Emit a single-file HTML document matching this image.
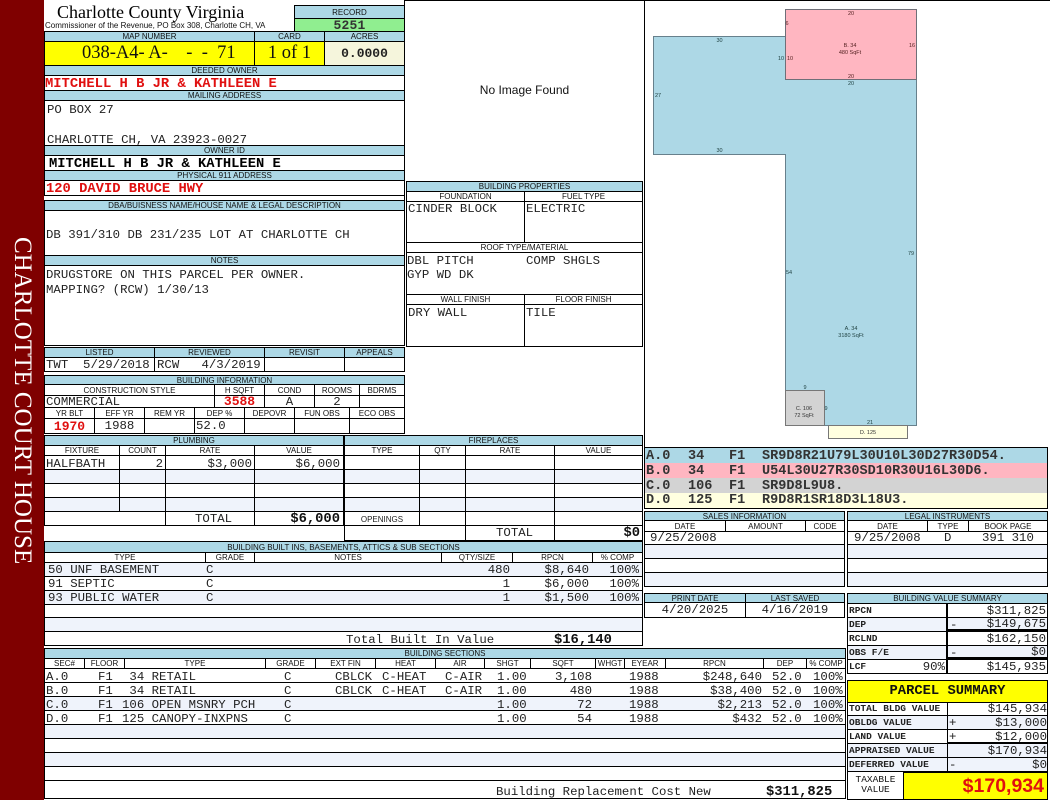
<!DOCTYPE html>
<html><head><meta charset="utf-8"><title>Charlotte County Virginia</title>
<style>
html,body{margin:0;padding:0;background:#fff;width:1050px;height:800px;overflow:hidden}
div{position:absolute;box-sizing:border-box;display:flex;align-items:center;white-space:pre;overflow:hidden;font-family:"Liberation Mono",monospace;font-size:12.35px;color:#222}
.x{border:1px solid #000}
.l{border:1px solid #000;background:#add8e6;justify-content:center;font:8px "Liberation Sans",sans-serif;color:#111}
.s{border:1px solid #000;background:#fff;justify-content:center;font:8px "Liberation Sans",sans-serif;color:#111}
.c{justify-content:center}
.r{justify-content:flex-end}
.b{font-weight:bold;font-size:13.8px;color:#111}
.red{color:#e01010}
.t{background:#eff3fb}
.v{background:#000;width:1px}
.h{background:#000;height:1px}
.f{font-weight:bold;font-size:13.55px;color:#333;height:15px}
.k{font-weight:bold;font-size:9.5px;color:#222}
</style></head><body>

<div style="left:0;top:0;width:44px;height:800px;background:#7f0000"></div>
<div style="left:0;top:236px;width:44px;height:330px;writing-mode:vertical-rl;justify-content:center;align-items:center;font:25px 'Liberation Serif',serif;color:#fff">CHARLOTTE COURT HOUSE</div>

<div style="left:57px;top:2px;width:200px;height:20px;font:18px 'Liberation Serif',serif;color:#000">Charlotte County Virginia</div>
<div style="left:45px;top:20px;width:240px;height:10px;font:8px 'Liberation Sans',sans-serif;color:#111">Commissioner of the Revenue, PO Box 308, Charlotte CH, VA</div>

<div class="l" style="left:294px;top:5px;width:111px;height:14px">RECORD</div>
<div class="x c" style="left:294px;top:18px;width:111px;height:14px;background:#90ee90;font-weight:bold;font-size:13px;color:#333;letter-spacing:.2px">5251</div>

<div class="l" style="left:44px;top:31px;width:211px;height:11px">MAP NUMBER</div>
<div class="l" style="left:254px;top:31px;width:71px;height:11px">CARD</div>
<div class="l" style="left:324px;top:31px;width:81px;height:11px">ACRES</div>
<div class="x" style="left:44px;top:41px;width:211px;height:25px;background:#ff0;font:18.5px 'Liberation Serif',serif;color:#111;padding-left:37px">038-A4- A-    -  -  71</div>
<div class="x c" style="left:254px;top:41px;width:71px;height:25px;background:#ff0;font:18.5px 'Liberation Serif',serif;color:#111">1 of 1</div>
<div class="x c" style="left:324px;top:41px;width:81px;height:25px;background:#f5f5dc;font-weight:bold;font-size:13px;color:#222">0.0000</div>

<div class="l" style="left:44px;top:65px;width:361px;height:11px">DEEDED OWNER</div>
<div class="x b red" style="left:44px;top:75px;width:361px;height:16px;padding-top:2px">MITCHELL H B JR &amp; KATHLEEN E</div>
<div class="l" style="left:44px;top:90px;width:361px;height:11px">MAILING ADDRESS</div>
<div class="x" style="left:44px;top:100px;width:361px;height:46px"></div>
<div style="left:47px;top:103px;height:14px;width:300px">PO BOX 27</div>
<div style="left:47px;top:133px;height:14px;width:300px">CHARLOTTE CH, VA 23923-0027</div>
<div class="l" style="left:44px;top:145px;width:361px;height:11px">OWNER ID</div>
<div class="x b" style="left:44px;top:155px;width:361px;height:16px;padding:2px 0 0 4px;color:#000">MITCHELL H B JR &amp; KATHLEEN E</div>
<div class="l" style="left:44px;top:170px;width:361px;height:11px">PHYSICAL 911 ADDRESS</div>
<div class="x b red" style="left:44px;top:180px;width:361px;height:16px;padding:2px 0 0 1px">120 DAVID BRUCE HWY</div>

<div class="l" style="left:44px;top:200px;width:361px;height:11px">DBA/BUISNESS NAME/HOUSE NAME &amp; LEGAL DESCRIPTION</div>
<div class="x" style="left:44px;top:210px;width:361px;height:46px"></div>
<div style="left:46px;top:228px;height:14px;width:340px">DB 391/310 DB 231/235 LOT AT CHARLOTTE CH</div>
<div class="l" style="left:44px;top:255px;width:361px;height:11px">NOTES</div>
<div class="x" style="left:44px;top:265px;width:361px;height:81px"></div>
<div style="left:46px;top:268px;height:14px;width:340px">DRUGSTORE ON THIS PARCEL PER OWNER.</div>
<div style="left:46px;top:283px;height:14px;width:340px">MAPPING? (RCW) 1/30/13</div>

<div class="l" style="left:44px;top:347px;width:111px;height:11px">LISTED</div>
<div class="l" style="left:154px;top:347px;width:111px;height:11px">REVIEWED</div>
<div class="l" style="left:264px;top:347px;width:81px;height:11px">REVISIT</div>
<div class="l" style="left:344px;top:347px;width:61px;height:11px">APPEALS</div>
<div class="x" style="left:44px;top:357px;width:111px;height:15px;padding-left:1px">TWT  5/29/2018</div>
<div class="x" style="left:154px;top:357px;width:111px;height:15px;padding-left:2px">RCW   4/3/2019</div>
<div class="x" style="left:264px;top:357px;width:81px;height:15px"></div>
<div class="x" style="left:344px;top:357px;width:61px;height:15px"></div>

<div class="l" style="left:44px;top:375px;width:361px;height:10px">BUILDING INFORMATION</div>
<div class="s" style="left:44px;top:384px;width:171px;height:12px">CONSTRUCTION STYLE</div>
<div class="s" style="left:214px;top:384px;width:51px;height:12px">H SQFT</div>
<div class="s" style="left:264px;top:384px;width:51px;height:12px">COND</div>
<div class="s" style="left:314px;top:384px;width:46px;height:12px">ROOMS</div>
<div class="s" style="left:359px;top:384px;width:46px;height:12px">BDRMS</div>
<div class="x" style="left:44px;top:395px;width:171px;height:13px;padding-left:1px">COMMERCIAL</div>
<div class="x c b red" style="left:214px;top:395px;width:51px;height:13px;font-size:13px">3588</div>
<div class="x c" style="left:264px;top:395px;width:51px;height:13px">A</div>
<div class="x c" style="left:314px;top:395px;width:46px;height:13px">2</div>
<div class="x" style="left:359px;top:395px;width:46px;height:13px"></div>
<div class="s" style="left:44px;top:407px;width:51px;height:12px">YR BLT</div>
<div class="s" style="left:94px;top:407px;width:51px;height:12px">EFF YR</div>
<div class="s" style="left:144px;top:407px;width:51px;height:12px">REM YR</div>
<div class="s" style="left:194px;top:407px;width:51px;height:12px">DEP %</div>
<div class="s" style="left:244px;top:407px;width:51px;height:12px">DEPOVR</div>
<div class="s" style="left:294px;top:407px;width:56px;height:12px">FUN OBS</div>
<div class="s" style="left:349px;top:407px;width:56px;height:12px">ECO OBS</div>
<div class="x c b red" style="left:44px;top:418px;width:51px;height:16px;font-size:13px">1970</div>
<div class="x c" style="left:94px;top:418px;width:51px;height:16px">1988</div>
<div class="x" style="left:144px;top:418px;width:51px;height:16px"></div>
<div class="x" style="left:194px;top:418px;width:51px;height:16px;padding-left:1px">52.0</div>
<div class="x" style="left:244px;top:418px;width:51px;height:16px"></div>
<div class="x" style="left:294px;top:418px;width:56px;height:16px"></div>
<div class="x" style="left:349px;top:418px;width:56px;height:16px"></div>

<!-- Top right frame -->
<div class="h" style="left:404px;top:0;width:646px"></div>
<div class="v" style="left:404px;top:0;height:346px"></div>
<div class="v" style="left:644px;top:0;height:448px"></div>
<div class="c" style="left:405px;top:80px;width:239px;height:20px;font:12px 'Liberation Sans',sans-serif;color:#111">No Image Found</div>

<!-- Building properties -->
<div class="l" style="left:406px;top:181px;width:237px;height:11px">BUILDING PROPERTIES</div>
<div class="s" style="left:406px;top:191px;width:119px;height:11px">FOUNDATION</div>
<div class="s" style="left:524px;top:191px;width:119px;height:11px">FUEL TYPE</div>
<div class="x" style="left:406px;top:201px;width:119px;height:42px;align-items:flex-start;padding:0 0 0 1px">CINDER BLOCK</div>
<div class="x" style="left:524px;top:201px;width:119px;height:42px;align-items:flex-start;padding-left:1px">ELECTRIC</div>
<div class="s" style="left:406px;top:242px;width:237px;height:11px">ROOF TYPE/MATERIAL</div>
<div class="x" style="left:406px;top:252px;width:237px;height:43px"></div>
<div style="left:407px;top:254px;width:110px;height:14px">DBL PITCH</div>
<div style="left:526px;top:254px;width:110px;height:14px">COMP SHGLS</div>
<div style="left:407px;top:268px;width:110px;height:14px">GYP WD DK</div>
<div class="s" style="left:406px;top:294px;width:119px;height:11px">WALL FINISH</div>
<div class="s" style="left:524px;top:294px;width:119px;height:11px">FLOOR FINISH</div>
<div class="x" style="left:406px;top:304px;width:119px;height:43px;align-items:flex-start;padding:1px 0 0 1px">DRY WALL</div>
<div class="x" style="left:524px;top:304px;width:119px;height:43px;align-items:flex-start;padding:1px 0 0 1px">TILE</div>

<!-- Plumbing -->
<div class="l" style="left:44px;top:435px;width:300px;height:11px">PLUMBING</div>
<div class="s" style="left:44px;top:445px;width:76px;height:11px">FIXTURE</div>
<div class="s" style="left:119px;top:445px;width:47px;height:11px">COUNT</div>
<div class="s" style="left:165px;top:445px;width:90px;height:11px">RATE</div>
<div class="s" style="left:254px;top:445px;width:90px;height:11px">VALUE</div>
<div class="x" style="left:44px;top:455px;width:300px;height:15px"></div>
<div class="x t" style="left:44px;top:469px;width:300px;height:15px"></div>
<div class="x" style="left:44px;top:483px;width:300px;height:15px"></div>
<div class="x t" style="left:44px;top:497px;width:300px;height:15px"></div>
<div class="x" style="left:44px;top:511px;width:300px;height:15px"></div>
<div class="v" style="left:119px;top:455px;height:56px"></div>
<div class="v" style="left:165px;top:455px;height:71px"></div>
<div class="v" style="left:254px;top:455px;height:71px"></div>
<div style="left:46px;top:457px;width:70px;height:14px">HALFBATH</div>
<div class="r" style="left:120px;top:457px;width:43px;height:14px">2</div>
<div class="r" style="left:166px;top:457px;width:86px;height:14px">$3,000</div>
<div class="r" style="left:255px;top:457px;width:85px;height:14px">$6,000</div>
<div style="left:195px;top:512px;width:50px;height:14px">TOTAL</div>
<div class="b r" style="left:255px;top:512px;width:85px;height:14px">$6,000</div>

<!-- Fireplaces -->
<div class="l" style="left:344px;top:435px;width:299px;height:11px">FIREPLACES</div>
<div class="s" style="left:344px;top:445px;width:76px;height:11px">TYPE</div>
<div class="s" style="left:419px;top:445px;width:47px;height:11px">QTY</div>
<div class="s" style="left:465px;top:445px;width:90px;height:11px">RATE</div>
<div class="s" style="left:554px;top:445px;width:89px;height:11px">VALUE</div>
<div class="x" style="left:344px;top:455px;width:299px;height:15px"></div>
<div class="x t" style="left:344px;top:469px;width:299px;height:15px"></div>
<div class="x" style="left:344px;top:483px;width:299px;height:15px"></div>
<div class="x t" style="left:344px;top:497px;width:299px;height:15px"></div>
<div class="x" style="left:344px;top:511px;width:299px;height:15px"></div>
<div class="x" style="left:344px;top:525px;width:299px;height:16px"></div>
<div class="v" style="left:419px;top:455px;height:71px"></div>
<div class="v" style="left:465px;top:455px;height:86px"></div>
<div class="v" style="left:554px;top:455px;height:86px"></div>
<div class="c" style="left:345px;top:512px;width:74px;height:14px;font:8px 'Liberation Sans',sans-serif">OPENINGS</div>
<div style="left:496px;top:526px;width:50px;height:14px">TOTAL</div>
<div class="b r" style="left:555px;top:526px;width:85px;height:14px">$0</div>

<!-- Built ins -->
<div class="l" style="left:44px;top:541px;width:599px;height:12px">BUILDING BUILT INS, BASEMENTS, ATTICS &amp; SUB SECTIONS</div>
<div class="s" style="left:44px;top:552px;width:162px;height:11px">TYPE</div>
<div class="s" style="left:205px;top:552px;width:50px;height:11px">GRADE</div>
<div class="s" style="left:254px;top:552px;width:188px;height:11px">NOTES</div>
<div class="s" style="left:441px;top:552px;width:72px;height:11px">QTY/SIZE</div>
<div class="s" style="left:512px;top:552px;width:81px;height:11px">RPCN</div>
<div class="s" style="left:592px;top:552px;width:51px;height:11px">% COMP</div>
<div class="x t" style="left:44px;top:562px;width:599px;height:15px"></div>
<div class="x" style="left:44px;top:576px;width:599px;height:15px"></div>
<div class="x t" style="left:44px;top:590px;width:599px;height:15px"></div>
<div class="x" style="left:44px;top:604px;width:599px;height:14px"></div>
<div class="x t" style="left:44px;top:617px;width:599px;height:15px"></div>
<div class="x" style="left:44px;top:631px;width:599px;height:15px"></div>
<div style="left:48px;top:563px;width:150px;height:14px">50 UNF BASEMENT</div>
<div style="left:48px;top:577px;width:150px;height:14px">91 SEPTIC</div>
<div style="left:48px;top:591px;width:150px;height:14px">93 PUBLIC WATER</div>
<div style="left:206px;top:563px;width:20px;height:14px">C</div>
<div style="left:206px;top:577px;width:20px;height:14px">C</div>
<div style="left:206px;top:591px;width:20px;height:14px">C</div>
<div class="r" style="left:450px;top:563px;width:60px;height:14px">480</div>
<div class="r" style="left:450px;top:577px;width:60px;height:14px">1</div>
<div class="r" style="left:450px;top:591px;width:60px;height:14px">1</div>
<div class="r" style="left:520px;top:563px;width:69px;height:14px">$8,640</div>
<div class="r" style="left:520px;top:577px;width:69px;height:14px">$6,000</div>
<div class="r" style="left:520px;top:591px;width:69px;height:14px">$1,500</div>
<div class="r" style="left:593px;top:563px;width:46px;height:14px">100%</div>
<div class="r" style="left:593px;top:577px;width:46px;height:14px">100%</div>
<div class="r" style="left:593px;top:591px;width:46px;height:14px">100%</div>
<div style="left:346px;top:633px;width:160px;height:14px">Total Built In Value</div>
<div class="b" style="left:554px;top:633px;width:70px;height:14px">$16,140</div>

<!-- Building sections -->
<div class="l" style="left:44px;top:648px;width:802px;height:11px">BUILDING SECTIONS</div>
<div class="s" style="left:44px;top:658px;width:41px;height:11px">SEC#</div>
<div class="s" style="left:84px;top:658px;width:41px;height:11px">FLOOR</div>
<div class="s" style="left:124px;top:658px;width:142px;height:11px">TYPE</div>
<div class="s" style="left:265px;top:658px;width:51px;height:11px">GRADE</div>
<div class="s" style="left:315px;top:658px;width:61px;height:11px">EXT FIN</div>
<div class="s" style="left:375px;top:658px;width:61px;height:11px">HEAT</div>
<div class="s" style="left:435px;top:658px;width:50px;height:11px">AIR</div>
<div class="s" style="left:484px;top:658px;width:47px;height:11px">SHGT</div>
<div class="s" style="left:530px;top:658px;width:66px;height:11px">SQFT</div>
<div class="s" style="left:595px;top:658px;width:30px;height:11px">WHGT</div>
<div class="s" style="left:624px;top:658px;width:42px;height:11px">EYEAR</div>
<div class="s" style="left:665px;top:658px;width:99px;height:11px">RPCN</div>
<div class="s" style="left:763px;top:658px;width:44px;height:11px">DEP</div>
<div class="s" style="left:806px;top:658px;width:40px;height:11px">% COMP</div>
<div class="x" style="left:44px;top:668px;width:802px;height:15px"></div>
<div class="x" style="left:44px;top:682px;width:802px;height:15px"></div>
<div class="x t" style="left:44px;top:696px;width:802px;height:15px"></div>
<div class="x" style="left:44px;top:710px;width:802px;height:15px"></div>
<div class="x t" style="left:44px;top:724px;width:802px;height:15px"></div>
<div class="x" style="left:44px;top:738px;width:802px;height:15px"></div>
<div class="x t" style="left:44px;top:752px;width:802px;height:15px"></div>
<div class="x" style="left:44px;top:766px;width:802px;height:15px"></div>
<div class="x" style="left:44px;top:780px;width:802px;height:19px"></div>

<div style="left:46px;top:670px;width:40px;height:14px">A.0</div>
<div style="left:98px;top:670px;width:20px;height:14px">F1</div>
<div style="left:122px;top:670px;width:140px;height:14px"> 34 RETAIL</div>
<div style="left:284px;top:670px;width:14px;height:14px">C</div>
<div style="left:335px;top:670px;width:42px;height:14px">CBLCK</div>
<div style="left:382px;top:670px;width:50px;height:14px">C-HEAT</div>
<div style="left:445px;top:670px;width:40px;height:14px">C-AIR</div>
<div style="left:497px;top:670px;width:32px;height:14px">1.00</div>
<div class="r" style="left:540px;top:670px;width:52px;height:14px">3,108</div>
<div style="left:629px;top:670px;width:32px;height:14px">1988</div>
<div class="r" style="left:690px;top:670px;width:72px;height:14px">$248,640</div>
<div style="left:772px;top:670px;width:32px;height:14px">52.0</div>
<div style="left:813px;top:670px;width:32px;height:14px">100%</div>

<div style="left:46px;top:684px;width:40px;height:14px">B.0</div>
<div style="left:98px;top:684px;width:20px;height:14px">F1</div>
<div style="left:122px;top:684px;width:140px;height:14px"> 34 RETAIL</div>
<div style="left:284px;top:684px;width:14px;height:14px">C</div>
<div style="left:335px;top:684px;width:42px;height:14px">CBLCK</div>
<div style="left:382px;top:684px;width:50px;height:14px">C-HEAT</div>
<div style="left:445px;top:684px;width:40px;height:14px">C-AIR</div>
<div style="left:497px;top:684px;width:32px;height:14px">1.00</div>
<div class="r" style="left:540px;top:684px;width:52px;height:14px">480</div>
<div style="left:629px;top:684px;width:32px;height:14px">1988</div>
<div class="r" style="left:690px;top:684px;width:72px;height:14px">$38,400</div>
<div style="left:772px;top:684px;width:32px;height:14px">52.0</div>
<div style="left:813px;top:684px;width:32px;height:14px">100%</div>

<div style="left:46px;top:698px;width:40px;height:14px">C.0</div>
<div style="left:98px;top:698px;width:20px;height:14px">F1</div>
<div style="left:122px;top:698px;width:140px;height:14px">106 OPEN MSNRY PCH</div>
<div style="left:284px;top:698px;width:14px;height:14px">C</div>
<div style="left:497px;top:698px;width:32px;height:14px">1.00</div>
<div class="r" style="left:540px;top:698px;width:52px;height:14px">72</div>
<div style="left:629px;top:698px;width:32px;height:14px">1988</div>
<div class="r" style="left:690px;top:698px;width:72px;height:14px">$2,213</div>
<div style="left:772px;top:698px;width:32px;height:14px">52.0</div>
<div style="left:813px;top:698px;width:32px;height:14px">100%</div>

<div style="left:46px;top:712px;width:40px;height:14px">D.0</div>
<div style="left:98px;top:712px;width:20px;height:14px">F1</div>
<div style="left:122px;top:712px;width:140px;height:14px">125 CANOPY-INXPNS</div>
<div style="left:284px;top:712px;width:14px;height:14px">C</div>
<div style="left:497px;top:712px;width:32px;height:14px">1.00</div>
<div class="r" style="left:540px;top:712px;width:52px;height:14px">54</div>
<div style="left:629px;top:712px;width:32px;height:14px">1988</div>
<div class="r" style="left:690px;top:712px;width:72px;height:14px">$432</div>
<div style="left:772px;top:712px;width:32px;height:14px">52.0</div>
<div style="left:813px;top:712px;width:32px;height:14px">100%</div>

<div style="left:496px;top:785px;width:230px;height:14px">Building Replacement Cost New</div>
<div class="b" style="left:766px;top:785px;width:70px;height:14px">$311,825</div>

<!-- Sketch -->
<svg style="position:absolute;left:645px;top:1px" width="403" height="446" viewBox="645 1 403 446" xmlns="http://www.w3.org/2000/svg">
<g stroke="#67808c" stroke-width="1" shape-rendering="crispEdges">
<path d="M653.5 36.5H785.5V79.5H916.5V425.5H785.5V154.5H653.5Z" fill="#add8e6"/>
<rect x="785.5" y="9.5" width="131" height="70" fill="#ffb6c1" stroke="#6f6f78"/>
<rect x="785.5" y="390.5" width="39" height="35" fill="#d3d3d3" stroke="#777"/>
<rect x="828.5" y="425.5" width="79" height="13" fill="#ffffe0" stroke="#777"/>
</g>
<g font-family="Liberation Sans, sans-serif" font-size="5.5" fill="#244" text-anchor="middle">
<text x="719.5" y="42">30</text><text x="658" y="97">27</text><text x="719.5" y="152">30</text>
<text x="789" y="274">54</text><text x="911" y="255">79</text><text x="851" y="85">20</text>
<text x="781" y="60">10</text><text x="851" y="330">A. 34</text><text x="851" y="337">3180 SqFt</text>
<text x="805" y="389">9</text><text x="826" y="410">9</text><text x="870" y="424">21</text>
</g>
<g font-family="Liberation Sans, sans-serif" font-size="5.5" fill="#522" text-anchor="middle">
<text x="851" y="15">20</text><text x="787" y="25">6</text><text x="790" y="60">10</text>
<text x="850" y="47">B. 34</text><text x="850" y="54">480 SqFt</text><text x="912" y="47">16</text><text x="851" y="78">20</text>
</g>
<g font-family="Liberation Sans, sans-serif" font-size="5.5" fill="#333" text-anchor="middle">
<text x="804" y="410">C. 106</text><text x="804" y="417">72 SqFt</text><text x="868" y="434">D. 125</text>
</g>
</svg>

<!-- Sketch vectors -->
<div style="left:644px;top:448px;width:404px;height:15px;background:#add8e6"></div>
<div style="left:644px;top:463px;width:404px;height:15px;background:#ffb6c1"></div>
<div style="left:644px;top:478px;width:404px;height:15px;background:#d3d3d3"></div>
<div style="left:644px;top:493px;width:404px;height:15px;background:#ffffe0"></div>
<div class="x" style="left:644px;top:447px;width:404px;height:62px;background:transparent"></div>
<div class="f" style="left:646px;top:449px;width:40px">A.0</div><div class="f" style="left:688px;top:449px;width:30px">34</div><div class="f" style="left:729px;top:449px;width:30px">F1</div><div class="f" style="left:762px;top:449px;width:280px">SR9D8R21U79L30U10L30D27R30D54.</div>
<div class="f" style="left:646px;top:464px;width:40px">B.0</div><div class="f" style="left:688px;top:464px;width:30px">34</div><div class="f" style="left:729px;top:464px;width:30px">F1</div><div class="f" style="left:762px;top:464px;width:280px">U54L30U27R30SD10R30U16L30D6.</div>
<div class="f" style="left:646px;top:479px;width:40px">C.0</div><div class="f" style="left:688px;top:479px;width:30px">106</div><div class="f" style="left:729px;top:479px;width:30px">F1</div><div class="f" style="left:762px;top:479px;width:280px">SR9D8L9U8.</div>
<div class="f" style="left:646px;top:493px;width:40px">D.0</div><div class="f" style="left:688px;top:493px;width:30px">125</div><div class="f" style="left:729px;top:493px;width:30px">F1</div><div class="f" style="left:762px;top:493px;width:280px">R9D8R1SR18D3L18U3.</div>

<!-- Sales info -->
<div class="l" style="left:644px;top:511px;width:201px;height:10px">SALES INFORMATION</div>
<div class="s" style="left:644px;top:520px;width:82px;height:12px">DATE</div>
<div class="s" style="left:725px;top:520px;width:81px;height:12px">AMOUNT</div>
<div class="s" style="left:805px;top:520px;width:40px;height:12px">CODE</div>
<div class="x" style="left:644px;top:531px;width:201px;height:14px;padding-left:5px">9/25/2008</div>
<div class="x t" style="left:644px;top:544px;width:201px;height:15px"></div>
<div class="x" style="left:644px;top:558px;width:201px;height:15px"></div>
<div class="x t" style="left:644px;top:572px;width:201px;height:15px"></div>

<!-- Legal -->
<div class="l" style="left:847px;top:511px;width:201px;height:10px">LEGAL INSTRUMENTS</div>
<div class="s" style="left:847px;top:520px;width:81px;height:12px">DATE</div>
<div class="s" style="left:927px;top:520px;width:42px;height:12px">TYPE</div>
<div class="s" style="left:968px;top:520px;width:80px;height:12px">BOOK PAGE</div>
<div class="x" style="left:847px;top:531px;width:201px;height:14px;padding-left:6px">9/25/2008</div>
<div style="left:944px;top:532px;width:10px;height:12px">D</div>
<div style="left:982px;top:532px;width:60px;height:12px">391 310</div>
<div class="x t" style="left:847px;top:544px;width:201px;height:15px"></div>
<div class="x" style="left:847px;top:558px;width:201px;height:15px"></div>
<div class="x t" style="left:847px;top:572px;width:201px;height:15px"></div>

<!-- Print date -->
<div class="l" style="left:644px;top:593px;width:102px;height:10px">PRINT DATE</div>
<div class="l" style="left:745px;top:593px;width:100px;height:10px">LAST SAVED</div>
<div class="x c" style="left:644px;top:602px;width:102px;height:16px">4/20/2025</div>
<div class="x c" style="left:745px;top:602px;width:100px;height:16px">4/16/2019</div>

<!-- Building value summary -->
<div class="l" style="left:847px;top:593px;width:201px;height:11px">BUILDING VALUE SUMMARY</div>
<div class="x" style="left:847px;top:603px;width:201px;height:15px"></div>
<div class="x t" style="left:847px;top:617px;width:201px;height:15px"></div>
<div class="x" style="left:847px;top:631px;width:201px;height:15px"></div>
<div class="x t" style="left:847px;top:645px;width:201px;height:15px"></div>
<div class="x" style="left:847px;top:659px;width:201px;height:15px"></div>
<div class="h" style="left:947px;top:629px;width:101px;height:3px"></div>
<div class="h" style="left:947px;top:657px;width:101px;height:3px"></div>
<div class="v" style="left:946px;top:603px;height:71px;width:2px"></div>
<div class="k" style="left:849px;top:603px;width:90px;height:14px">RPCN</div>
<div class="k" style="left:849px;top:617px;width:90px;height:14px">DEP</div>
<div class="k" style="left:849px;top:631px;width:90px;height:14px">RCLND</div>
<div class="k" style="left:849px;top:645px;width:90px;height:14px">OBS F/E</div>
<div class="k" style="left:849px;top:659px;width:50px;height:14px">LCF</div>
<div class="r" style="left:900px;top:660px;width:45px;height:14px">90%</div>
<div style="left:950px;top:618px;width:14px;height:13px">-</div>
<div style="left:950px;top:646px;width:14px;height:13px">-</div>
<div class="r" style="left:965px;top:604px;width:81px;height:14px">$311,825</div>
<div class="r" style="left:965px;top:617px;width:81px;height:13px">$149,675</div>
<div class="r" style="left:965px;top:632px;width:81px;height:14px">$162,150</div>
<div class="r" style="left:965px;top:645px;width:81px;height:13px">$0</div>
<div class="r" style="left:965px;top:660px;width:81px;height:14px">$145,935</div>

<!-- Parcel summary -->
<div class="x c" style="left:847px;top:680px;width:201px;height:23px;background:#ff0;font-weight:bold;font-size:13.8px;color:#111">PARCEL SUMMARY</div>
<div class="x" style="left:847px;top:702px;width:201px;height:14px"></div>
<div class="x t" style="left:847px;top:715px;width:201px;height:15px"></div>
<div class="x" style="left:847px;top:729px;width:201px;height:15px"></div>
<div class="x t" style="left:847px;top:743px;width:201px;height:15px"></div>
<div class="x t" style="left:847px;top:757px;width:201px;height:15px"></div>
<div class="h" style="left:947px;top:742px;width:101px;height:2px"></div>
<div class="v" style="left:947px;top:702px;height:70px"></div>
<div class="k" style="left:849px;top:701px;width:96px;height:14px">TOTAL BLDG VALUE</div>
<div class="k" style="left:849px;top:715px;width:96px;height:14px">OBLDG VALUE</div>
<div class="k" style="left:849px;top:729px;width:96px;height:14px">LAND VALUE</div>
<div class="k" style="left:849px;top:743px;width:96px;height:14px">APPRAISED VALUE</div>
<div class="k" style="left:849px;top:757px;width:96px;height:14px">DEFERRED VALUE</div>
<div style="left:949px;top:716px;width:14px;height:14px">+</div>
<div style="left:949px;top:730px;width:14px;height:14px">+</div>
<div style="left:949px;top:758px;width:14px;height:14px">-</div>
<div class="r" style="left:965px;top:702px;width:82px;height:14px">$145,934</div>
<div class="r" style="left:965px;top:716px;width:82px;height:14px">$13,000</div>
<div class="r" style="left:965px;top:730px;width:82px;height:13px">$12,000</div>
<div class="r" style="left:965px;top:744px;width:82px;height:14px">$170,934</div>
<div class="r" style="left:965px;top:758px;width:82px;height:14px">$0</div>
<div class="x" style="left:847px;top:771px;width:57px;height:29px"></div>
<div class="k c" style="left:848px;top:773px;width:55px;height:12px;font-weight:normal;color:#111">TAXABLE</div>
<div class="k c" style="left:848px;top:783px;width:55px;height:12px;font-weight:normal;color:#111">VALUE</div>
<div class="x r" style="left:903px;top:771px;width:145px;height:29px;background:#ff0;border-top-width:2px;font:bold 19.5px 'Liberation Sans',sans-serif;color:#e01010;padding-right:3px">$170,934</div>
</body></html>
